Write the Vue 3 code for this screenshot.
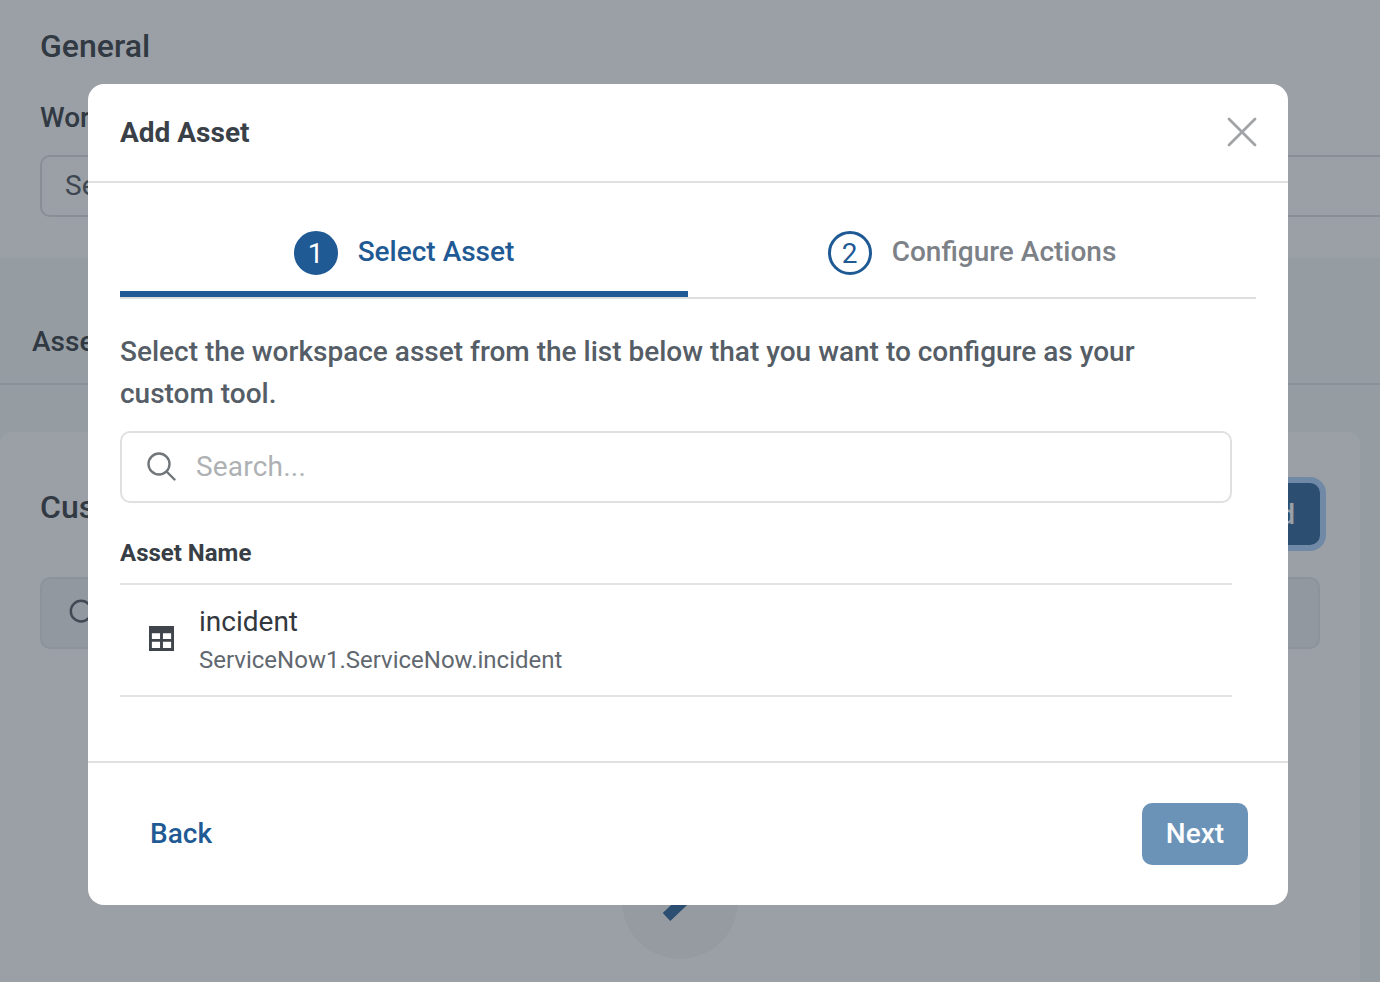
<script setup>
const steps = [
  { n: 1, label: 'Select Asset', active: true },
  { n: 2, label: 'Configure Actions', active: false },
]
</script>

<template>
  <div class="page">
    <section class="general">
      <h2 class="general-title">General</h2>
      <div class="field-label">Workspace</div>
      <div class="select">Select</div>
    </section>
    <section class="tabs-band">
      <span class="tab-label">Assets</span>
    </section>
    <section class="lower">
      <div class="card">
        <div class="card-head">
          <h3 class="card-title">Custom Tools</h3>
          <button class="add-btn" type="button">Add</button>
        </div>
        <div class="page-search">
          <svg class="page-search-icon" viewBox="0 0 32 32" fill="none" stroke="currentColor" stroke-width="2.6">
            <circle cx="14" cy="14" r="11" />
            <path d="M22 22l8 8" />
          </svg>
        </div>
        <div class="empty">
          <div class="empty-circle">
            <svg class="pencil" viewBox="0 0 60 60" fill="none" stroke="currentColor" stroke-width="11"><path d="M16.500 46L46 18" /></svg>
          </div>
        </div>
      </div>
    </section>

    <div class="backdrop">
      <div class="modal">
        <header class="modal-head">
          <h1 class="modal-title">Add Asset</h1>
          <svg class="close" viewBox="0 0 32 32" fill="none" stroke="currentColor" stroke-width="2.8" stroke-linecap="round">
            <path d="M3 3l26 26M29 3L3 29" />
          </svg>
        </header>

        <div class="stepper">
          <div v-for="s in steps" :key="s.n" class="step" :class="{ active: s.active }">
            <span class="step-num">{{ s.n }}</span>
            <span class="step-label">{{ s.label }}</span>
          </div>
        </div>

        <div class="modal-body">
          <p class="intro">Select the workspace asset from the list below that you want to configure as your custom tool.</p>
          <div class="search">
            <svg class="search-icon" viewBox="0 0 30 30" fill="none" stroke="currentColor" stroke-width="2.4" stroke-linecap="round">
              <circle cx="13" cy="13" r="10.5" />
              <path d="M21 21l7.5 7.5" />
            </svg>
            <span class="placeholder">Search...</span>
          </div>
          <div class="table-head">Asset Name</div>
          <div class="asset-row">
            <svg class="table-icon" viewBox="0 0 26 26">
              <path fill-rule="evenodd" d="M0 0h26v26H0zM3 7.500v6h8.500v-6zM14.500 7.500v6H23v-6zM3 16.500V23h8.500v-6.500zM14.500 16.500V23H23v-6.500z" fill="currentColor" />
            </svg>
            <div class="asset-text">
              <div class="asset-name">incident</div>
              <div class="asset-path">ServiceNow1.ServiceNow.incident</div>
            </div>
          </div>
        </div>

        <footer class="modal-foot">
          <button class="back" type="button">Back</button>
          <button class="next" type="button">Next</button>
        </footer>
      </div>
    </div>
  </div>
</template>

<style>
html, body { margin: 0; overflow: hidden; }
</style>

<style scoped>
.page {
  position: relative;
  height: 982px;
  overflow: hidden;
  background: #f3f6f6;
  font-family: Roboto, "Liberation Sans", sans-serif;
  color: #2b3036;
}
h1, h2, h3, p { margin: 0; }

.general {
  box-sizing: border-box;
  height: 258px;
  background: #fff;
  padding: 26px 0 0 40px;
  margin-right: -60px;
}
.general-title { font-size: 32px; line-height: 40px; font-weight: 500; }
.field-label { margin-top: 34px; font-size: 28px; line-height: 36px; font-weight: 500; }
.select {
  box-sizing: border-box;
  height: 62px;
  margin-top: 19px;
  border: 2px solid #d8dadd;
  border-radius: 10px;
  padding: 0 23px;
  font-size: 28px;
  line-height: 58px;
  color: #444b53;
}

.tabs-band {
  box-sizing: border-box;
  height: 127px;
  padding: 67px 0 0 32px;
  background: #f3f6f6;
  border-bottom: 2px solid #dcdee1;
}
.tab-label { font-size: 28px; line-height: 34px; font-weight: 500; }

.lower {
  height: 598px;
  padding-top: 47px;
  box-sizing: border-box;
}
.card {
  box-sizing: border-box;
  width: 1360px;
  height: 551px;
  background: #fff;
  border-radius: 12px 12px 0 0;
  padding: 51px 40px 0;
}
.card-head {
  display: flex;
  align-items: center;
  justify-content: space-between;
  height: 62px;
}
.card-title { font-size: 32px; line-height: 48px; font-weight: 500; padding-bottom: 14px; }
.add-btn {
  box-sizing: border-box;
  height: 62px;
  width: 140px;
  border: 0;
  border-radius: 10px;
  background: #1f5a94;
  box-shadow: 0 0 0 6px #a8d1ff;
  color: #fff;
  font: 500 28px Roboto, sans-serif;
  text-align: right;
  padding: 0 25px;
}
.page-search {
  box-sizing: border-box;
  display: flex;
  align-items: center;
  height: 72px;
  margin-top: 32px;
  padding-left: 26px;
  background: #eceef0;
  border: 2px solid #e3e5e8;
  border-radius: 10px;
  color: #4a525b;
}
.page-search-icon { width: 30px; height: 30px; }
.empty { display: flex; justify-content: center; margin-top: 194px; }
.empty-circle {
  width: 116px;
  height: 116px;
  border-radius: 50%;
  background: #f3f4f2;
  display: flex;
  align-items: center;
  justify-content: center;
  color: #1f5a94;
}
.pencil { width: 60px; height: 60px; }

.backdrop {
  position: absolute;
  inset: 0;
  background: rgba(56, 65, 78, 0.5);
  display: flex;
  justify-content: center;
  align-items: flex-start;
  padding: 84px 4px 0 0;
  box-sizing: border-box;
}
.modal {
  width: 1200px;
  height: 821px;
  background: #fff;
  border-radius: 16px;
  display: flex;
  flex-direction: column;
}
.modal-head {
  box-sizing: border-box;
  height: 99px;
  flex: none;
  display: flex;
  align-items: center;
  justify-content: space-between;
  padding: 0 30px 2px 32px;
  border-bottom: 2px solid #dfe0e1;
}
.modal-title { font-size: 28px; line-height: 36px; font-weight: 700; color: #3a4047; padding-top: 2px; }
.close { width: 32px; height: 32px; color: #a0a4a6; }

.stepper {
  flex: none;
  display: grid;
  grid-template-columns: 1fr 1fr;
  height: 116px;
  margin: 0 32px;
  box-sizing: border-box;
  border-bottom: 2px solid #dddfe1;
}
.step {
  display: flex;
  align-items: center;
  justify-content: center;
  gap: 20px;
  padding-top: 52px;
  box-sizing: border-box;
  height: 114px;
  border-bottom: 6px solid transparent;
  padding-bottom: 20px;
}
.step.active { border-bottom-color: #1f5a94; }
.step-num {
  box-sizing: border-box;
  width: 44px;
  height: 44px;
  border-radius: 50%;
  border: 3.5px solid #1f5a94;
  color: #1f5a94;
  display: flex;
  align-items: center;
  justify-content: center;
  font-size: 28px;
}
.step.active .step-num { background: #1f5a94; color: #fff; }
.step-label { font-size: 28px; line-height: 36px; font-weight: 500; color: #7c8187; padding-bottom: 2px; }
.step.active .step-label { color: #1f5a94; }

.modal-body {
  flex: 1;
  padding: 32px 56px 0 32px;
}
.intro { font-size: 28px; line-height: 42px; font-weight: 500; color: #555d66; }
.search {
  box-sizing: border-box;
  height: 72px;
  margin-top: 16px;
  display: flex;
  align-items: center;
  gap: 20px;
  padding: 0 0 2px 24px;
  border: 2px solid #dfe0e1;
  border-radius: 10px;
}
.search-icon { width: 30px; height: 30px; color: #71767a; }
.placeholder { font-size: 28px; letter-spacing: 0.2px; color: #aeb1b4; }
.table-head {
  box-sizing: border-box;
  height: 82px;
  border-bottom: 2px solid #e2e3e4;
  padding-top: 34px;
  font-size: 24px;
  line-height: 32px;
  font-weight: 700;
  color: #383e45;
}
.asset-row {
  box-sizing: border-box;
  height: 112px;
  display: flex;
  align-items: center;
  gap: 25px;
  padding-left: 29px;
  border-bottom: 2px solid #e2e3e4;
}
.table-icon { width: 25px; height: 25px; color: #40454c; flex: none; margin-bottom: 3px; }
.asset-name { font-size: 28px; line-height: 36px; color: #33383e; }
.asset-path { font-size: 24px; line-height: 32px; margin-top: 4px; color: #62686f; }

.modal-foot {
  box-sizing: border-box;
  flex: none;
  height: 144px;
  border-top: 2px solid #dfe0e1;
  display: flex;
  align-items: center;
  justify-content: space-between;
  padding: 0 40px 0 62px;
}
.back, .next {
  border: 0;
  font: 500 28px Roboto, sans-serif;
  padding: 0 0 2px;
}
.back { background: none; color: #1f5a94; }
.next {
  width: 106px;
  height: 62px;
  border-radius: 10px;
  background: #6b93b8;
  color: #fff;
}
</style>
